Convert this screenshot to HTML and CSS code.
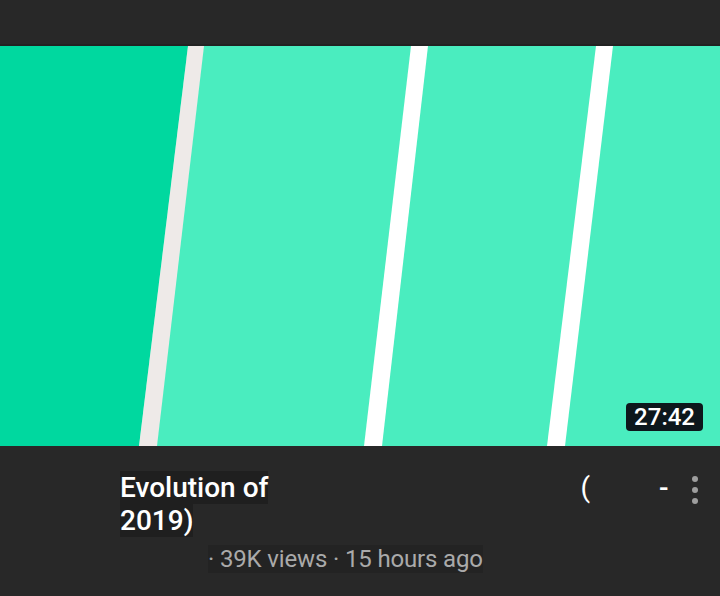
FILE: index.html
```html
<!DOCTYPE html>
<html lang="en">
<head>
    <meta charset="UTF-8">
    <meta name="viewport" content="width=device-width, initial-scale=1.0">
    <title>Video</title>
    <link rel="stylesheet" href="styles.css">
</head>
<body>
    <div class="topbar"></div>

    <div class="thumb">
        <svg class="thumb-art" viewBox="0 0 720 400" width="720" height="400">
            <rect width="720" height="400" fill="#4aedbf"/>
            <polygon points="0,0 188,0 139,400 0,400" fill="#00d89f"/>
            <polygon points="188,0 204,0 157,400 139,400" fill="#eeeae8"/>
            <polygon points="411,0 428,0 382,400 364,400" fill="#ffffff"/>
            <polygon points="596,0 613,0 565,400 547,400" fill="#ffffff"/>
        </svg>
        <span class="duration">27:42</span>
    </div>

    <div class="info">
        <div class="details">
            <div class="title-row">
                <span class="title-part">Evolution of</span>
                <span class="paren">(</span>
                <span class="dash">-</span>
                <button class="menu" aria-label="More">
                    <span></span><span></span><span></span>
                </button>
            </div>
            <div class="title-row">
                <span class="title-part">2019)</span>
            </div>
            <div class="meta"><span>· 39K views · 15 hours ago</span></div>
        </div>
    </div>
</body>
</html>
```

FILE: styles.css
```css
* {
    margin: 0;
    padding: 0;
    box-sizing: border-box;
}

body {
    font-family: Roboto, 'Liberation Sans', sans-serif;
    background-color: #282828;
    color: white;
    width: 720px;
    height: 596px;
    overflow: hidden;
}

.topbar {
    height: 46px;
    background-color: #282828;
    border-bottom: 2px solid #222;
}

.thumb {
    position: relative;
    height: 400px;
}

.thumb-art {
    display: block;
}

.duration {
    position: absolute;
    right: 17px;
    bottom: 15px;
    height: 28px;
    padding: 0 8px;
    background-color: #0d171c;
    border-radius: 4px;
    font-size: 24px;
    font-weight: 500;
    line-height: 28px;
    color: white;
}

.info {
    padding: 25px 0 0 120px;
}

.title-row {
    display: flex;
    align-items: flex-start;
    font-size: 28px;
    font-weight: 500;
    line-height: 33px;
}

.title-part {
    background-color: #1f1f1f;
}

.paren {
    margin-left: 312px;
    font-weight: 400;
}

.dash {
    margin-left: 69px;
}

.menu {
    display: flex;
    flex-direction: column;
    gap: 5px;
    margin-left: 23px;
    margin-top: 5px;
    background: none;
    border: none;
}

.menu span {
    width: 6px;
    height: 6px;
    border-radius: 50%;
    background-color: #9e9e9e;
}

.meta {
    margin-top: 7px;
    padding-left: 88px;
    font-size: 24px;
    line-height: 30px;
    letter-spacing: -0.15px;
    color: #aaaaaa;
}

.meta span {
    background-color: #232323;
}
```
